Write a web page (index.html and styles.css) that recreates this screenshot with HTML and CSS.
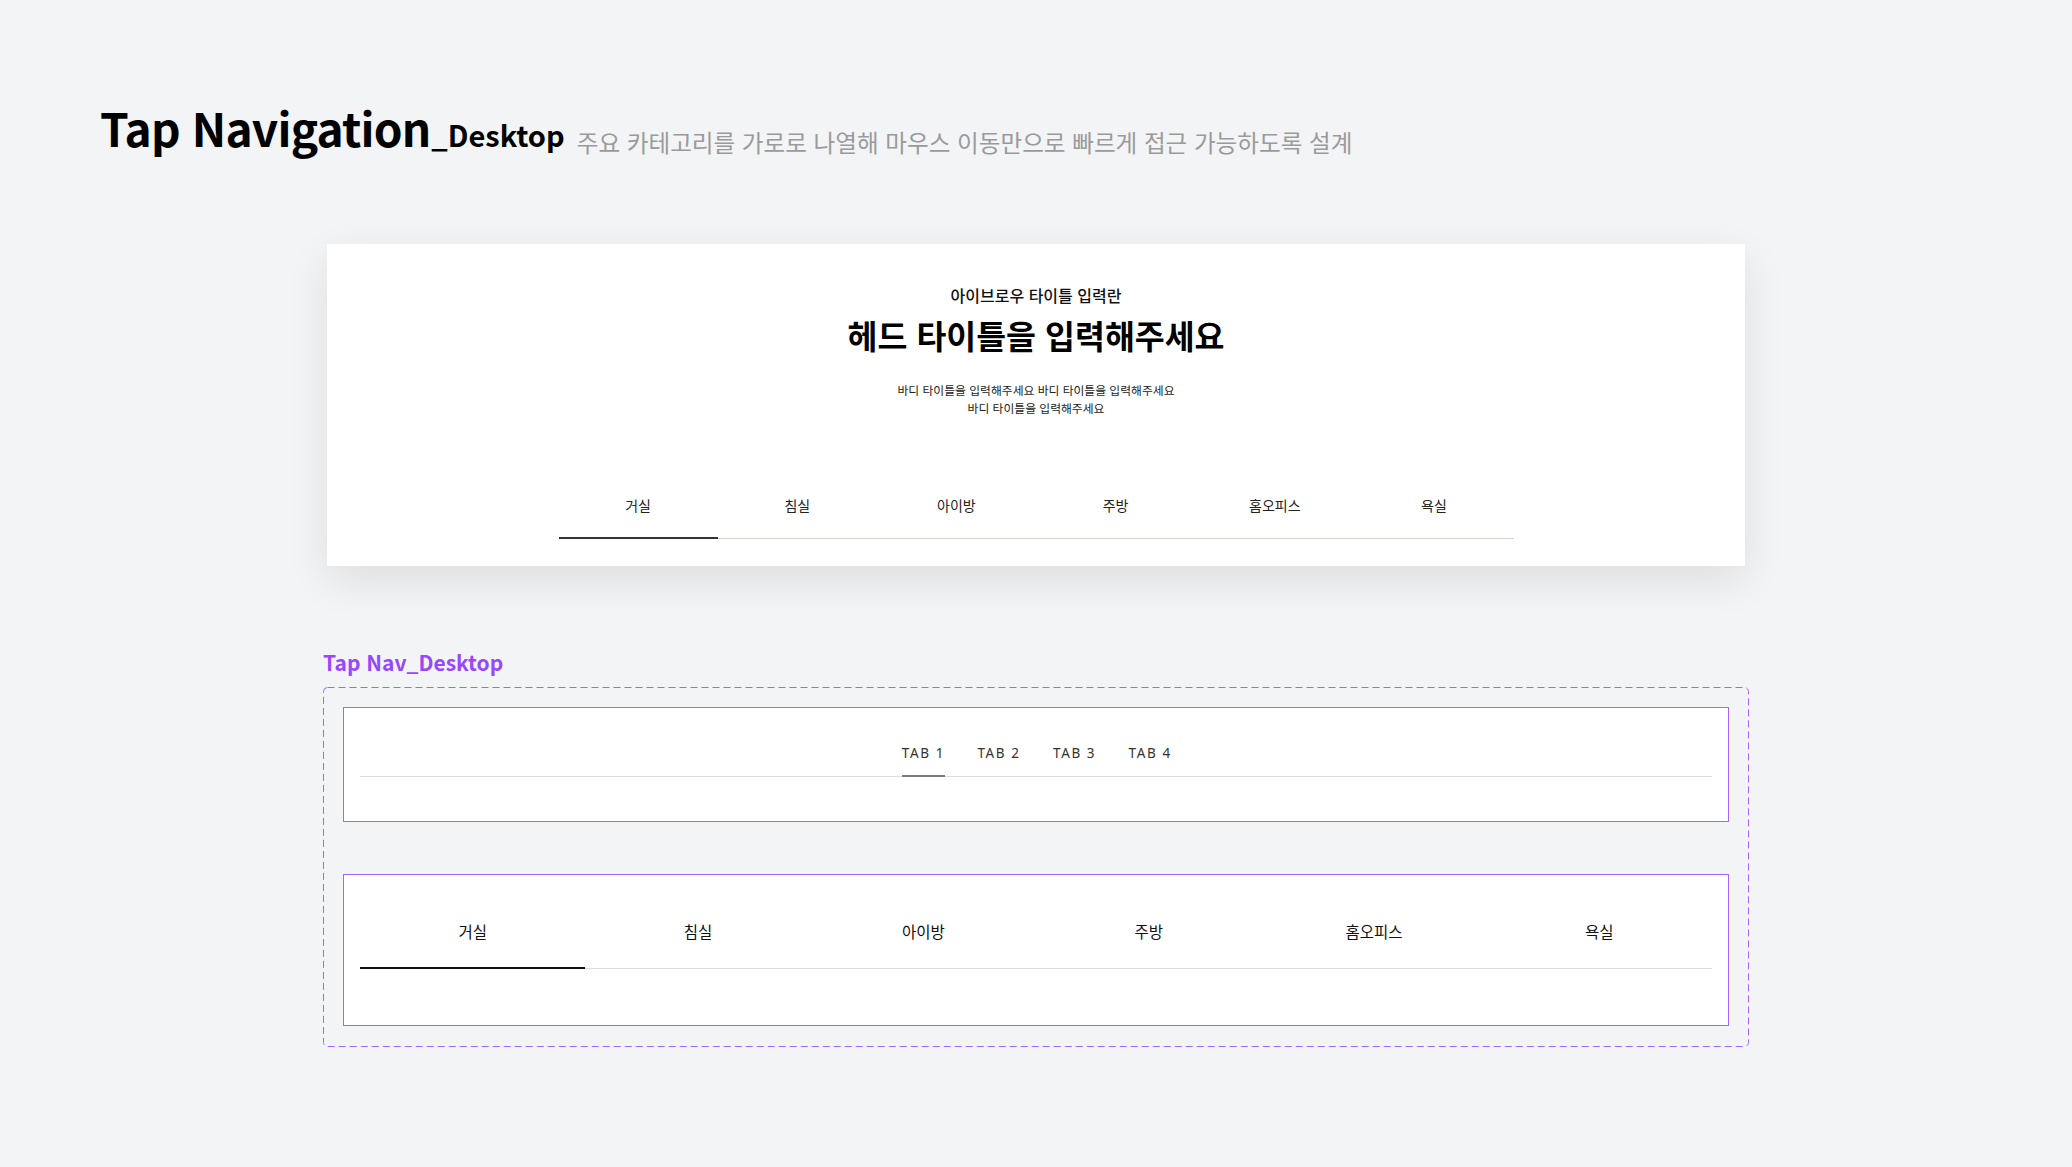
FILE: index.html
```html
<!DOCTYPE html>
<html lang="ko">
<head>
<meta charset="utf-8">
<title>Tap Navigation_Desktop</title>
<link rel="stylesheet" href="styles.css">
</head>
<body>
<div class="page">
  <header class="page-head">
    <h1 class="page-title">Tap Navigation</h1>
    <span class="page-title-sub">_Desktop</span>
    <p class="page-desc">주요 카테고리를 가로로 나열해 마우스 이동만으로 빠르게 접근 가능하도록 설계</p>
  </header>

  <section class="card">
    <p class="eyebrow">아이브로우 타이틀 입력란</p>
    <h2 class="headline">헤드 타이틀을 입력해주세요</h2>
    <p class="body-text">바디 타이틀을 입력해주세요 바디 타이틀을 입력해주세요<br>바디 타이틀을 입력해주세요</p>
    <nav class="card-tabs">
      <a class="card-tab is-active">거실</a>
      <a class="card-tab">침실</a>
      <a class="card-tab">아이방</a>
      <a class="card-tab">주방</a>
      <a class="card-tab">홈오피스</a>
      <a class="card-tab">욕실</a>
    </nav>
  </section>

  <section class="component">
    <h3 class="component-label">Tap Nav_Desktop</h3>
    <div class="component-set">
      <svg class="dash-frame" aria-hidden="true"><rect class="dash-rect" x="0.5" y="0.5" rx="4" ry="4"></rect></svg>
      <div class="variant variant-small">
        <nav class="small-tabs">
          <a class="small-tab is-active">TAB 1</a>
          <a class="small-tab">TAB 2</a>
          <a class="small-tab">TAB 3</a>
          <a class="small-tab">TAB 4</a>
        </nav>
      </div>
      <div class="variant variant-wide">
        <nav class="wide-tabs">
          <a class="wide-tab is-active">거실</a>
          <a class="wide-tab">침실</a>
          <a class="wide-tab">아이방</a>
          <a class="wide-tab">주방</a>
          <a class="wide-tab">홈오피스</a>
          <a class="wide-tab">욕실</a>
        </nav>
      </div>
    </div>
  </section>
</div>
</body>
</html>
```

FILE: styles.css
```css
* { box-sizing: border-box; }

html, body {
  margin: 0;
  padding: 0;
}

body {
  background: #f3f4f6;
  font-family: "Noto Sans CJK KR", "Noto Sans", sans-serif;
  color: #111;
  width: 2072px;
  min-height: 1167px;
}

.page {
  display: flex;
  flex-direction: column;
  align-items: center;
  padding-top: 103px;
}

/* header */
.page-head {
  align-self: stretch;
  display: flex;
  align-items: baseline;
  padding-left: 100px;
}

.page-title {
  margin: 0;
  font-size: 46px;
  line-height: 48px;
  font-weight: 700;
  color: #000;
  letter-spacing: -0.8px;
}

.page-title-sub {
  margin-left: 1px;
  font-size: 29px;
  line-height: 29px;
  font-weight: 700;
  color: #000;
}

.page-desc {
  align-self: flex-end;
  margin: 0 0 0 12px;
  font-size: 23.6px;
  line-height: 17px;
  font-weight: 400;
  color: #9a9a9a;
}

/* card */
.card {
  margin-top: 93px;
  width: 1418px;
  background: #fff;
  box-shadow: 0 14px 40px rgba(0, 0, 0, 0.09);
  padding: 39px 0 27px;
  display: flex;
  flex-direction: column;
  align-items: center;
  text-align: center;
}

.eyebrow {
  margin: 0;
  font-size: 16px;
  line-height: 24px;
  font-weight: 500;
  color: #111;
}

.headline {
  margin: 5px 0 0;
  font-size: 32.5px;
  line-height: 46px;
  font-weight: 700;
  color: #000;
}

.body-text {
  margin: 23px 0 0;
  font-size: 11.8px;
  line-height: 18px;
  font-weight: 400;
  color: #222;
}

.card-tabs {
  margin-top: 78px;
  width: 955px;
  display: flex;
  border-bottom: 1px solid #d8d5cf;
}

.card-tab {
  flex: 1;
  text-align: center;
  font-size: 14px;
  line-height: 20px;
  color: #222;
  padding-bottom: 22px;
  border-bottom: 2px solid transparent;
  margin-bottom: -1px;
}

.card-tab.is-active {
  border-bottom-color: #333;
}

/* component set */
.component {
  margin-top: 85px;
  width: 1426px;
  display: flex;
  flex-direction: column;
}

.component-label {
  margin: 0;
  font-size: 21px;
  line-height: 22px;
  font-weight: 700;
  color: #9747ff;
}

.component-set {
  position: relative;
  margin-top: 14px;
  padding: 20px 20px 21px;
  display: flex;
  flex-direction: column;
  gap: 52px;
}

.dash-frame {
  position: absolute;
  inset: 0;
  width: 100%;
  height: 100%;
  overflow: visible;
  pointer-events: none;
}

.dash-rect {
  width: calc(100% - 1px);
  height: calc(100% - 1px);
  fill: none;
  stroke: #a066ff;
  stroke-width: 1;
  stroke-dasharray: 7 4;
}

.variant {
  background: #fff;
  border: 1px solid #a066ff;
  padding: 0 16px;
}

.variant-small {
  padding-top: 35px;
  padding-bottom: 44px;
}

.small-tabs {
  display: flex;
  justify-content: center;
  gap: 34px;
  border-bottom: 1px solid #dcdcdc;
}

.small-tab {
  font-family: "Noto Sans", sans-serif;
  font-size: 13.5px;
  line-height: 20px;
  letter-spacing: 1.6px;
  margin-right: -1.6px;
  color: #333;
  padding-bottom: 12px;
  border-bottom: 2px solid transparent;
  margin-bottom: -1px;
}

.small-tab.is-active {
  border-bottom-color: #7a7a7a;
}

.variant-wide {
  padding-top: 44px;
  padding-bottom: 56px;
}

.wide-tabs {
  display: flex;
  border-bottom: 1px solid #dcdcdc;
}

.wide-tab {
  flex: 1;
  text-align: center;
  font-size: 15.5px;
  line-height: 24px;
  color: #111;
  padding-bottom: 24px;
  border-bottom: 2px solid transparent;
  margin-bottom: -1px;
}

.wide-tab.is-active {
  border-bottom-color: #111;
}
```
